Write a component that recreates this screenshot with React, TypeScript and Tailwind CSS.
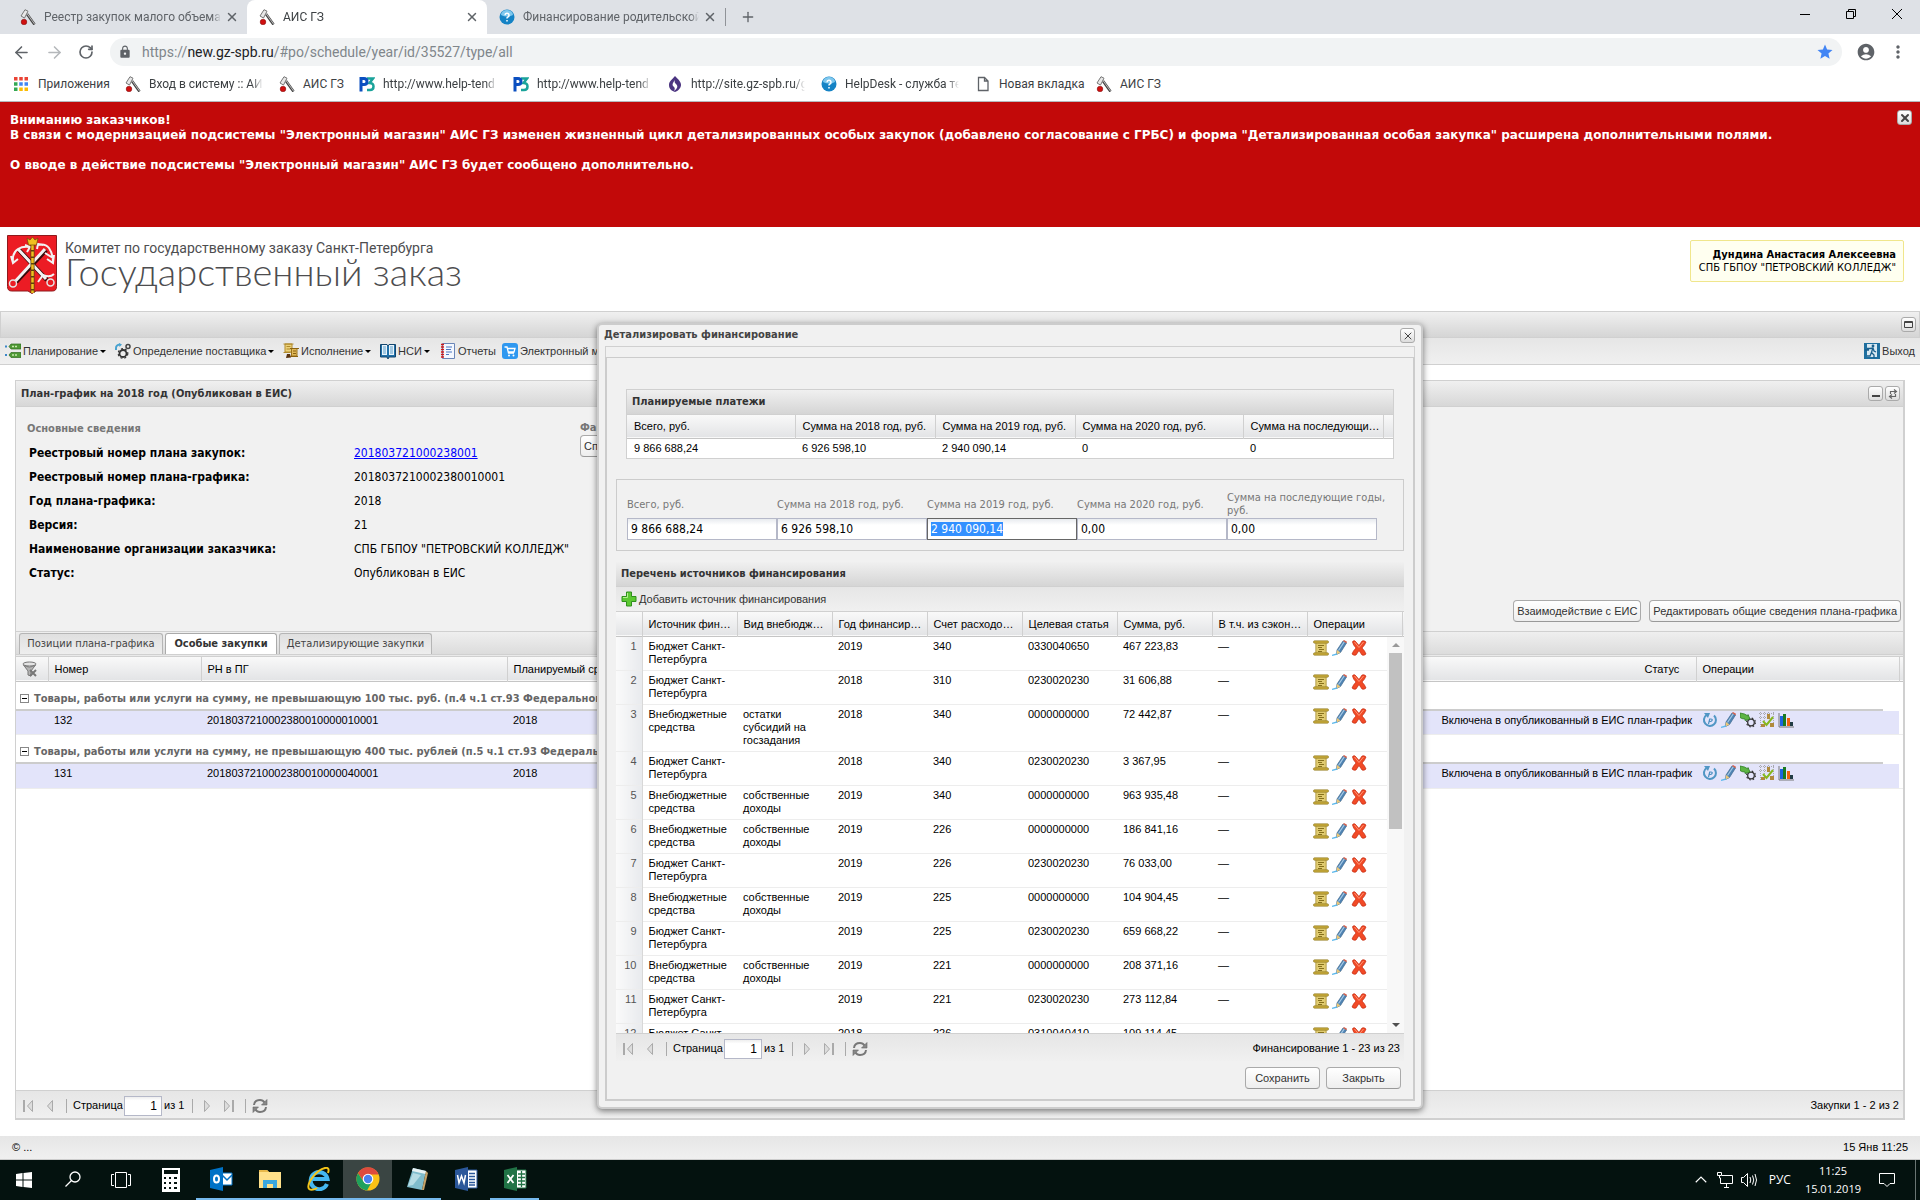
import { ReactNode, useEffect, useRef } from 'react'
import clsx from 'clsx'
import { ArrowLeft, ArrowRight, Plus, RotateCw, X } from 'lucide-react'
import { MdAccountCircle, MdLock, MdMoreVert, MdStar } from 'react-icons/md'

const tabs = [
  { title: 'Реестр закупок малого объема', icon: 'gavel', active: false, width: 'w-[247px] pl-5' },
  { title: 'АИС ГЗ', icon: 'gavel', active: true, width: 'w-60 pl-3' },
  { title: 'Финансирование родительской', icon: 'help', active: false, width: 'w-[238px] pl-3' },
]

const bookmarks = [
  { title: 'Вход в систему :: АИС', icon: 'gavel', width: 'w-[154px]', long: true },
  { title: 'АИС ГЗ', icon: 'gavel', width: 'w-20' },
  { title: 'http://www.help-tend', icon: 'p3', width: 'w-[154px]', long: true },
  { title: 'http://www.help-tend', icon: 'p3', width: 'w-[154px]', long: true },
  { title: 'http://site.gz-spb.ru/g', icon: 'drop', width: 'w-[154px]', long: true },
  { title: 'HelpDesk - служба те', icon: 'help', width: 'w-[154px]', long: true },
  { title: 'Новая вкладка', icon: 'page', width: 'w-[121px]' },
  { title: 'АИС ГЗ', icon: 'gavel', width: 'w-20' },
]

const menu = [
  { title: 'Планирование', icon: 'plan', arrow: true, width: 'w-[110px]' },
  { title: 'Определение поставщика', icon: 'gears', arrow: true, width: 'w-[168px]' },
  { title: 'Исполнение', icon: 'scrolls', arrow: true, width: 'w-[97px]' },
  { title: 'НСИ', icon: 'book', arrow: true, width: 'w-[60px]' },
  { title: 'Отчеты', icon: 'report', arrow: false, width: 'w-[62px]' },
  { title: 'Электронный магазин', icon: 'cart', arrow: false, width: 'w-40' },
]

const info = [
  { label: 'Реестровый номер плана закупок:', value: '201803721000238001', link: true },
  { label: 'Реестровый номер плана-графика:', value: '2018037210002380010001' },
  { label: 'Год плана-графика:', value: '2018' },
  { label: 'Версия:', value: '21' },
  { label: 'Наименование организации заказчика:', value: 'СПБ ГБПОУ "ПЕТРОВСКИЙ КОЛЛЕДЖ"' },
  { label: 'Статус:', value: 'Опубликован в ЕИС' },
]

const purchases = [
  {
    group: 'Товары, работы или услуги на сумму, не превышающую 100 тыс. руб. (п.4 ч.1 ст.93 Федерального закона № 44-ФЗ)',
    number: '132',
    rn: '2018037210002380010000010001',
  },
  {
    group: 'Товары, работы или услуги на сумму, не превышающую 400 тыс. рублей (п.5 ч.1 ст.93 Федерального закона № 44-ФЗ)',
    number: '131',
    rn: '2018037210002380010000040001',
  },
]

const plannedHead = ['Всего, руб.', 'Сумма на 2018 год, руб.', 'Сумма на 2019 год, руб.', 'Сумма на 2020 год, руб.', 'Сумма на последующие годы, руб.']
const planned = ['9 866 688,24', '6 926 598,10', '2 940 090,14', '0', '0']

const fields = [
  { id: 'total', label: 'Всего, руб.', value: '9 866 688,24' },
  { id: 'y2018', label: 'Сумма на 2018 год, руб.', value: '6 926 598,10' },
  { id: 'y2019', label: 'Сумма на 2019 год, руб.', value: '2 940 090,14' },
  { id: 'y2020', label: 'Сумма на 2020 год, руб.', value: '0,00' },
  { id: 'later', label: 'Сумма на последующие годы, руб.', value: '0,00' },
]

const sourceHead = [
  'Источник финансирования',
  'Вид внебюджетных средств',
  'Год финансирования',
  'Счет расходования',
  'Целевая статья',
  'Сумма, руб.',
  'В т.ч. из сэкономленных',
  'Операции',
]

const budget = 'Бюджет Санкт-Петербурга'
const extra = 'Внебюджетные средства'
const own = 'собственные доходы'

const sources = [
  [budget, '', '2019', '340', '0330040650', '467 223,83'],
  [budget, '', '2018', '310', '0230020230', '31 606,88'],
  [extra, 'остатки субсидий на госзадания', '2018', '340', '0000000000', '72 442,87'],
  [budget, '', '2018', '340', '0230020230', '3 367,95'],
  [extra, own, '2019', '340', '0000000000', '963 935,48'],
  [extra, own, '2019', '226', '0000000000', '186 841,16'],
  [budget, '', '2019', '226', '0230020230', '76 033,00'],
  [extra, own, '2019', '225', '0000000000', '104 904,45'],
  [budget, '', '2019', '225', '0230020230', '659 668,22'],
  [extra, own, '2019', '221', '0000000000', '208 371,16'],
  [budget, '', '2019', '221', '0230020230', '273 112,84'],
  [budget, '', '2018', '226', '0310040410', '109 114,45'],
]

const Svg = ({ children, className = 'size-4' }: { children: ReactNode; className?: string }) => (
  <svg viewBox="0 0 16 16" className={clsx('shrink-0', className)} fill="none" aria-hidden="true">
    {children}
  </svg>
)

const Icon = ({ name }: { name: string }) => {
  switch (name) {
    case 'gavel':
      return (
        <Svg>
          <path d="m7 5 7.500 10.500" stroke="#444" strokeWidth="2.600" />
          <path d="m7 4.500 7.500 10.500" stroke="#bbb" />
          <path d="M1 7 5 .7l3 1.500L4.500 9z" fill="#e8e8e8" stroke="#777" />
          <circle cx="4" cy="13" r="2.800" fill="#d01010" stroke="#700" strokeWidth=".5" />
        </Svg>
      )
    case 'help':
      return (
        <Svg>
          <circle cx="8" cy="8" r="7.500" fill="#1583c5" />
          <path d="M2 6a6 5 0 0 1 12 0q-6 3-12 0z" fill="#7fc8ee" />
          <path d="M6 6.200a2 2 0 1 1 2.500 2q-.5.3-.5 1.300M8 11v1.500" stroke="#fff" strokeWidth="1.500" />
        </Svg>
      )
    case 'p3':
      return (
        <Svg>
          <path d="M8 2.500h6L10.500 7q4 0 4 3.500t-3.500 3.500H8" stroke="#1aa39a" strokeWidth="2.500" />
          <path d="M2 15.500V2.500H5q3 0 3 3t-3 3H2" stroke="#0b4fc0" strokeWidth="3" />
        </Svg>
      )
    case 'drop':
      return (
        <Svg>
          <path d="M8 0c4 4 6 6 6 9s-3 6-6 7c-3-1-6-3-6-7s3-5 6-9z" fill="#4b3480" />
          <path d="M8 4c-3 4-3 5-1 7 1 1 1 2 0 4 4-3 4-5 2-7-1-1-2-2-1-4z" fill="#fff" />
        </Svg>
      )
    case 'page':
      return (
        <Svg>
          <path d="M3.500 1.500h6l3.500 3.500v9.500H3.500zM9.500 1.500V5H13" stroke="#5f6368" strokeWidth="1.300" />
        </Svg>
      )
    case 'plan':
      return (
        <Svg>
          <path d="M0 3.500h2M0 12h2" stroke="#3a86c8" strokeWidth="2" />
          <path d="M4 3.500 6 1h10v5H6zM4 12l2-2.500h10v5H6z" fill="#4f9a35" stroke="#2f6a1f" strokeWidth=".7" />
          <path d="M7 3.500h6M7 12h6" stroke="#c8e8b0" strokeWidth="1.500" strokeDasharray="2 1" />
        </Svg>
      )
    case 'gears':
      return (
        <Svg>
          <path d="M1 7V5q0-3 4-3.500" stroke="#4aa3d0" strokeWidth="2" />
          <path d="m4 0 3 1.500L4.500 4z" fill="#4aa3d0" />
          <circle cx="8" cy="10.500" r="3.500" stroke="#333" strokeWidth="1.800" />
          <circle cx="8" cy="10.500" r="4.800" stroke="#333" strokeWidth="1.200" strokeDasharray="2 2" />
          <circle cx="13" cy="3.500" r="2" stroke="#444" strokeWidth="1.500" />
        </Svg>
      )
    case 'scrolls':
      return (
        <Svg>
          <path d="M2 1h7v8H2z" fill="#ecd27a" stroke="#b08a2c" />
          <path d="M.5 1h10M.5 9.500h7M3.500 3.500h4M3.500 6h4" stroke="#b08a2c" strokeWidth="1.200" />
          <path d="M8.500 5.500H14V13H8.500z" fill="#e0b858" stroke="#9a721c" />
          <path d="M7 5.500h9M7.500 13.500H15M10 8h3M10 10.500h3" stroke="#8a6210" strokeWidth="1.200" />
          <path d="m3 15 1-4h3l1 3.500z" fill="#5a3410" />
        </Svg>
      )
    case 'book':
      return (
        <Svg>
          <path d="M.5 1.500H7L8 3l1-1.500h6.500V14H9l-1 2-1-2H.5z" fill="#1f6fa8" stroke="#14466e" />
          <path d="M2 2h5v10H2zM9 2h5v10H9z" fill="#eaf4fb" />
          <path d="M3 4h3M3 6h3M3 8h3M3 10h3M10 4h3M10 6h3M10 8h3M10 10h3" stroke="#5a9cc8" />
        </Svg>
      )
    case 'report':
      return (
        <Svg>
          <path d="M2.500.5h12v15h-12z" fill="#f4f8ff" stroke="#6a86b8" />
          <path d="M1 1.500h3M1 4h3M1 6.500h3M1 9h3M1 11.500h3M1 14h3" stroke="#d01818" strokeWidth="1.500" />
          <path d="M6 4h6M6 6.500h5M6 9h6M6 11.500h3" stroke="#4a76c0" />
        </Svg>
      )
    case 'cart':
      return (
        <Svg>
          <rect width="16" height="16" rx="3" fill="#2f98f0" />
          <path d="M2.500 4H5l1.500 6H12M5.500 5.500H13L12 9H6.500" stroke="#fff" strokeWidth="1.300" />
          <circle cx="7" cy="12.500" r="1" fill="#fff" />
          <circle cx="11.500" cy="12.500" r="1" fill="#fff" />
        </Svg>
      )
    case 'exit':
      return (
        <Svg>
          <path d="M0 0h16v16H0z" fill="#1f6f9f" />
          <path d="M3 1h10v13H3z" fill="#d9e9f2" />
          <circle cx="9" cy="3" r="1.400" fill="#1a5f8c" />
          <path d="M3 5.500h3L9 5l1 3 2 1M8.500 6 7.500 9.500 10 12v3M7.500 9.500 6 13H3M1 7h4" stroke="#1a5f8c" strokeWidth="1.300" />
        </Svg>
      )
    case 'scroll':
      return (
        <Svg>
          <path d="M3 2.500h10V13H3z" fill="#e0cb70" />
          <path d="M2.800 3v10M13.200 3v10" stroke="#a68c2c" strokeWidth=".8" />
          <rect x=".5" y=".8" width="15" height="2.400" rx="1" fill="#c8ab3a" stroke="#8a7420" strokeWidth=".6" />
          <rect x=".5" y="12.800" width="15" height="2.400" rx="1" fill="#c8ab3a" stroke="#8a7420" strokeWidth=".6" />
          <path d="M5 5.500h6M5 7.500h4M6 9.500h5M5 11.500h4" stroke="#7d6713" strokeWidth=".9" />
        </Svg>
      )
    case 'pencil':
      return (
        <Svg>
          <path d="m5 10 6-9 3.500 2-6 9.500-4 2z" fill="#4f84b4" stroke="#3d678c" strokeWidth=".7" />
          <path d="m6.500 10.500 6-9" stroke="#a8cbe6" strokeWidth="1.200" />
          <path d="m11 1 1-1 3 1.800-.5 1.400z" fill="#d4604c" />
          <path d="m5 10-.5 4.500 4-2z" fill="#ecc878" />
          <path d="M0 15.300 5 14" stroke="#5cb8ec" strokeWidth="1.300" />
        </Svg>
      )
    case 'delete':
      return (
        <Svg>
          <path d="M2 1q2-1 3 1l3 3.500L11 1q2-1 4 1-1 3-4 6 3 3 4 6-2 2-4 1l-3-4.500L5 15q-2 1-4-1 1-3 4-6Q2 5 1.500 2z" fill="#f24a26" stroke="#c32a10" strokeWidth=".7" />
          <path d="M3.500 2 8 7.500 12.500 2" stroke="#ff9475" strokeWidth="1" />
        </Svg>
      )
    case 'history':
      return (
        <Svg>
          <path d="M4.500 3A6 6 0 1 0 12 3.500" stroke="#5096c4" strokeWidth="2" />
          <path d="M2 1h6L6 6z" fill="#5096c4" />
          <path d="m6.500 12 1.200-5H9q1.500 0 1.200 1.200T8.500 9.500H7.300" stroke="#4a8fc0" strokeWidth="1.200" />
        </Svg>
      )
    case 'link':
      return (
        <Svg>
          <circle cx="11" cy="10.500" r="3.300" stroke="#333" strokeWidth="1.300" />
          <circle cx="11" cy="10.500" r="4.400" stroke="#333" strokeWidth="1.200" strokeDasharray="1.500 2" />
          <path d="M0 1q5 .5 8 3V2.500L10 7 5 8.500V7Q2 7 0 5.500z" fill="#5db544" stroke="#2f7d23" strokeWidth=".8" />
        </Svg>
      )
    case 'check':
      return (
        <Svg>
          <path d="M1.500 0v16M5.500 0v9M9.500 0v5M14.500 0v16M0 1.500h16M0 5.500h7" stroke="#999" strokeWidth=".8" strokeDasharray="1 1" />
          <path d="M2 12h4v3H2zM11 11h4v4h-4zM8 2h3v5H8z" fill="#b08a3c" />
          <path d="m4 9 3.500 4L14 5" stroke="#86b81e" strokeWidth="2" />
        </Svg>
      )
    case 'chart':
      return (
        <Svg>
          <path d="M1 1v14h15" stroke="#777" />
          <path d="M2 4h3v10H2z" fill="#1d64e0" />
          <path d="M5 2h3v12H5z" fill="#1a7a20" />
          <path d="M9 6h3v8H9z" fill="#f0620c" />
          <path d="M12 10h3v4h-3z" fill="#223c44" />
        </Svg>
      )
    case 'filter':
      return (
        <Svg>
          <path d="M1.500 4q6 4 12 0L9 10v5l-3-1v-4z" fill="#b4b4b4" stroke="#777" />
          <ellipse cx="7.500" cy="3" rx="6.500" ry="2" fill="#e4e4e4" stroke="#777" />
          <path d="m8 9 6 6M14 9l-6 6" stroke="#777" strokeWidth="2" />
        </Svg>
      )
    case 'add':
      return (
        <Svg>
          <path d="M5.500 1h5v4.500H15v5h-4.500V15h-5v-4.500H1v-5h4.500z" fill="#5cc832" stroke="#2f8f1c" />
          <path d="M6.500 2v4.500H2" stroke="#b4f090" />
        </Svg>
      )
    case 'refresh':
      return (
        <Svg>
          <path d="M2 7q.5-5 6-5 3 0 4.500 2.500" stroke="#777" strokeWidth="2" />
          <path d="M15 1.500V7H9.500z" fill="#888" stroke="#666" strokeWidth=".6" />
          <path d="M14 9q-.5 5-6 5-3 0-4.500-2.500" stroke="#777" strokeWidth="2" />
          <path d="M1 14.500V9h5.500z" fill="#888" stroke="#666" strokeWidth=".6" />
        </Svg>
      )
    case 'first':
      return (
        <Svg>
          <path d="M4 2v12" stroke="#aaa" strokeWidth="2" />
          <path d="M12.500 2.500 7.500 8l5 5.500z" fill="#ddd" stroke="#aaa" />
        </Svg>
      )
    case 'prev':
      return (
        <Svg>
          <path d="m10.500 2.500-5 5.500 5 5.500z" fill="#ddd" stroke="#aaa" />
        </Svg>
      )
    case 'next':
      return (
        <Svg>
          <path d="m5.500 2.500 5 5.500-5 5.500z" fill="#ddd" stroke="#aaa" />
        </Svg>
      )
    default:
      return (
        <Svg>
          <path d="M12 2v12" stroke="#aaa" strokeWidth="2" />
          <path d="m3.500 2.500 5 5.500-5 5.500z" fill="#ddd" stroke="#aaa" />
        </Svg>
      )
  }
}

const Emblem = () => (
  <svg viewBox="0 0 50 59" className="h-[59px] w-[50px] shrink-0" fill="none" aria-hidden="true">
    <path d="M.5.500h49v51q0 4.500-4 4.500H29l-4 2.500-4-2.500H4.500q-4 0-4-4.500z" fill="#ec1c24" stroke="#8e1a1c" />
    <path d="M9 47 39 15M12 15l28 30" stroke="#3a0a0a" strokeWidth="4.500" />
    <path d="M8.500 46 38 14M11 14l28 30" stroke="#f2f2f2" strokeWidth="3" />
    <circle cx="6" cy="48.500" r="3.500" stroke="#e4e4e4" strokeWidth="1.500" />
    <circle cx="43.500" cy="47.500" r="3.500" stroke="#e4e4e4" strokeWidth="1.500" />
    <path d="M6 27q-1-9 5-13 5-3 11-2M4 21l2 7 5-4M18 10l5 2-3 5" stroke="#f2f2f2" strokeWidth="2" />
    <path d="M31 10q7-2 11 3 4 6 4 14M30 14l1-5 5 1M47 20l-1 8-6-4M38 18l8 5" stroke="#f2f2f2" strokeWidth="2" />
    <path d="m31 47 5-7q7 3 11-1" stroke="#f2f2f2" strokeWidth="2" />
    <path d="M25.500 10v48" stroke="#5c420a" strokeWidth="4" />
    <path d="M25.500 10v48" stroke="#f0c020" strokeWidth="2.500" strokeDasharray="5 1.500" />
    <path d="m20 3 3 2 2.500-3L28 5l3-2-1.500 7h-8z" fill="#f0c020" stroke="#6a4a08" strokeWidth=".7" />
  </svg>
)

const Tool = ({ label, children }: { label: string; children: ReactNode }) => (
  <button aria-label={label} className="flex size-[15px] items-center justify-center rounded-[3px] border border-[#aaa] bg-gradient-to-b from-white to-[#ddd] text-[#444]">
    {children}
  </button>
)

const Button = ({ children, className }: { children: ReactNode; className?: string }) => (
  <button className={clsx('h-[22px] rounded-[4px] border border-[#aaa] border-b-[#999] bg-gradient-to-b from-white to-[#eee] px-[3px] whitespace-nowrap text-[#333]', className)}>
    {children}
  </button>
)

const Separator = () => <span className="h-3.5 w-px bg-[#aaa]" />

const Paging = ({ summary, id }: { summary: string; id: string }) => (
  <div className="flex h-7 items-center border-t border-[#d0d0d0] bg-gradient-to-b from-[#e6e6e6] to-[#f0f0f0] px-1 pt-0.5 text-[11px] text-black">
    <button aria-label="Первая" className="mr-1.5"><Icon name="first" /></button>
    <button aria-label="Предыдущая" className="mr-2"><Icon name="prev" /></button>
    <Separator />
    <label htmlFor={id} className="ml-1.5 w-[51px]">Страница</label>
    <input id={id} defaultValue="1" className="h-5 w-[38px] border border-[#b5b8c8] bg-white bg-gradient-to-b from-[#eee] to-white to-20% pr-1 text-right text-xs outline-none" />
    <span className="ml-0.5 w-7">из 1</span>
    <Separator />
    <button aria-label="Следующая" className="mr-1.5 ml-1.5"><Icon name="next" /></button>
    <button aria-label="Последняя" className="mr-2"><Icon name="last" /></button>
    <Separator />
    <button aria-label="Обновить" className="ml-1.5"><Icon name="refresh" /></button>
    <span className="ml-auto">{summary}</span>
  </div>
)

const Browser = () => (
  <header className="font-[Roboto,sans-serif] text-xs">
    <div className="flex h-[34px] items-stretch bg-[#dee1e6]">
      {tabs.map((tab, i) => (
        <div key={i} className={clsx('flex items-center pr-2', tab.width, tab.active ? 'rounded-t-lg bg-white text-[#3c4043]' : 'text-[#5f6368]')}>
          <Icon name={tab.icon} />
          <span className="mr-1 ml-2 min-w-0 flex-1 overflow-hidden mask-r-from-95% whitespace-nowrap">{tab.title}</span>
          <button aria-label="Закрыть вкладку"><X className="size-3.5 text-[#5f6368]" strokeWidth={2.5} /></button>
        </div>
      ))}
      <div className="my-2 w-px bg-[#909398]" />
      <button aria-label="Новая вкладка" className="px-3.5"><Plus className="size-4 text-[#5f6368]" /></button>
      <div className="ml-auto flex items-center gap-9 pr-[18px]">
        <button aria-label="Свернуть" className="pb-1.5"><svg viewBox="0 0 10 10" className="size-2.5"><path d="M0 5.500h10" stroke="#000" /></svg></button>
        <button aria-label="Развернуть" className="pb-1.5"><svg viewBox="0 0 10 10" className="size-2.5" fill="none"><path d="M.5 2.500h7v7h-7zM2.500 2V.500h7v7H8" stroke="#000" /></svg></button>
        <button aria-label="Закрыть" className="pb-1.5"><svg viewBox="0 0 10 10" className="size-2.5"><path d="m0 0 10 10M10 0 0 10" stroke="#000" /></svg></button>
      </div>
    </div>
    <div className="flex h-9 items-center bg-white pr-3 pl-3">
      <button aria-label="Назад"><ArrowLeft className="size-[19px] text-[#5f6368]" /></button>
      <button aria-label="Вперед" className="ml-3.5"><ArrowRight className="size-[19px] text-[#b5b8bb]" /></button>
      <button aria-label="Обновить" className="ml-3.5"><RotateCw className="size-4 text-[#5f6368]" strokeWidth={2.5} /></button>
      <div className="ml-4 flex h-7 flex-1 items-center rounded-full bg-[#f1f3f4] px-2">
        <MdLock className="size-3.5 text-[#5f6368]" />
        <a href="#" className="ml-2.5 flex-1 text-sm text-[#80868b]">https://<span className="text-[#202124]">new.gz-spb.ru</span>/#po/schedule/year/id/35527/type/all</a>
        <MdStar className="size-[18px] text-[#4285f4]" />
      </div>
      <MdAccountCircle className="ml-3.5 size-5 text-[#5f6368]" />
      <MdMoreVert className="ml-3 size-5 text-[#5f6368]" />
    </div>
    <nav className="flex h-8 items-center border-b border-[#b6b9bc] bg-white pb-[3px] pl-3.5 text-[#3c4043]">
      <a href="#" className="flex w-[111px] items-center gap-2.5">
        <Svg className="size-3.5">
          <path d="M0 2h4M6 2h4M12 2h4" stroke="#ea4335" strokeWidth="4" />
          <path d="M0 8h4" stroke="#34a853" strokeWidth="4" />
          <path d="M6 8h4M12 8h4" stroke="#4285f4" strokeWidth="4" />
          <path d="M0 14h4" stroke="#34a853" strokeWidth="4" />
          <path d="M6 14h4M12 14h4" stroke="#fbbc04" strokeWidth="4" />
        </Svg>
        Приложения
      </a>
      {bookmarks.map((mark, i) => (
        <a key={i} href="#" className={clsx('flex items-center', mark.width)}>
          <Icon name={mark.icon} />
          <span className={clsx('ml-2 whitespace-nowrap', mark.long && 'mr-4 flex-1 overflow-hidden mask-r-from-90%')}>{mark.title}</span>
        </a>
      ))}
    </nav>
  </header>
)

const PlanPanel = () => (
  <section className="mx-[15px] mt-[15px] mb-4 flex flex-1 flex-col border border-r-2 border-b-2 border-[#d0d0d0] bg-[#f1f1f1]">
    <div className="flex h-[26px] items-center gap-0.5 border-b border-[#d0d0d0] bg-gradient-to-b from-[#f0f0f0] to-[#d7d7d7] pr-[3px] pl-[5px]">
      <h2 className="flex-1 pt-0.5 font-['DejaVu_Sans_Condensed','DejaVu_Sans',sans-serif] text-[11px] font-bold text-[#333]">План-график на 2018 год (Опубликован в ЕИС)</h2>
      <Tool label="Свернуть панель"><svg viewBox="0 0 8 8" className="size-2"><path d="M0 6h8" stroke="#444" strokeWidth="2" /></svg></Tool>
      <Tool label="Обновить панель">
        <svg viewBox="0 0 10 10" className="size-2.5" fill="none"><path d="M2.500 5V2.500H8M7.500 5v2.500H2M6 .5l2.500 2-2.500 2M4 9.500l-2.500-2 2.500-2" stroke="#666" strokeWidth="1.200" /></svg>
      </Tool>
    </div>
    <div className="relative h-56 font-['DejaVu_Sans_Condensed','DejaVu_Sans',sans-serif] text-xs text-black">
      <h3 className="pt-3.5 pl-[11px] text-[11px] leading-4 font-bold text-[#777]">Основные сведения</h3>
      <dl className="grid grid-cols-[325px_1fr] pt-1 pl-[13px] leading-6">
        {info.map((item) => (
          <div key={item.label} className="contents">
            <dt className="font-bold">{item.label}</dt>
            <dd>{item.link ? <a href="#" className="text-[#00f] underline">{item.value}</a> : item.value}</dd>
          </div>
        ))}
      </dl>
      <div className="absolute top-3.5 left-[564px] font-['Liberation_Sans',Arial,sans-serif] text-[11px]">
        <div className="font-['DejaVu_Sans_Condensed','DejaVu_Sans',sans-serif] leading-[14px] font-bold text-[#777]">Файлы</div>
        <Button className="w-24 text-left">Список файлов</Button>
      </div>
      <div className="absolute right-0.5 bottom-[9px] flex gap-2 font-['Liberation_Sans',Arial,sans-serif] text-[11px]">
        <Button>Взаимодействие с ЕИС</Button>
        <Button>Редактировать общие сведения плана-графика</Button>
      </div>
    </div>
    <div className="flex h-6 items-end gap-0.5 border-y border-[#d0d0d0] bg-gradient-to-b from-[#efefef] to-[#dcdcdc] pl-[3px] font-['DejaVu_Sans_Condensed','DejaVu_Sans',sans-serif] text-[11px] text-[#444]">
      <button className="h-[21px] w-36 rounded-t-[3px] border border-b-0 border-[#b5b5b5] bg-gradient-to-b from-[#e0e0e0] to-[#eee]">Позиции плана-графика</button>
      <button className="h-[21px] w-[112px] rounded-t-[3px] border border-b-0 border-[#aaa] bg-white font-bold text-[#333]">Особые закупки</button>
      <button className="h-[21px] w-[153px] rounded-t-[3px] border border-b-0 border-[#b5b5b5] bg-gradient-to-b from-[#e0e0e0] to-[#eee]">Детализирующие закупки</button>
    </div>
    <div className="h-0.5 border-b border-[#d0d0d0] bg-[#eaeaea]" />
    <div className="flex-1 bg-white">
      <table className="w-full table-fixed text-[11px] text-black">
        <colgroup>
          <col className="w-8" />
          <col className="w-[153px]" />
          <col className="w-[306px]" />
          <col />
          <col className="w-[280px]" />
          <col className="w-[203px]" />
          <col className="w-1" />
        </colgroup>
        <thead>
          <tr className="h-6 border-b border-[#c5c5c5] bg-gradient-to-b from-[#f9f9f9] to-[#e3e4e6] text-left [&>th]:border-r [&>th]:border-[#d0d0d0] [&>th]:px-1.5 [&>th]:font-normal">
            <th><button aria-label="Фильтр" className="block"><Icon name="filter" /></button></th>
            <th>Номер</th>
            <th>РН в ПГ</th>
            <th>Планируемый срок</th>
            <th className="pl-57!">Статус</th>
            <th>Операции</th>
            <th className="border-r-0!" />
          </tr>
        </thead>
        {purchases.map((item) => (
          <tbody key={item.number}>
            <tr>
              <td colSpan={7} className="pr-5">
                <div className="flex h-[29px] items-end border-b-2 border-[#ccc] pb-0.5 pl-1 font-['DejaVu_Sans_Condensed','DejaVu_Sans',sans-serif] leading-4 font-bold text-[#666]">
                  <button aria-label="Свернуть группу" className="mr-[5px] mb-1 flex size-[9px] items-center justify-center border border-[#888] bg-white">
                    <span className="h-px w-[5px] bg-black" />
                  </button>
                  {item.group}
                </div>
              </td>
            </tr>
            <tr className="h-6 border-b border-[#ededed] bg-[#e3e4fa] align-top leading-4 [&>td]:px-1.5 [&>td]:pt-px">
              <td />
              <td>{item.number}</td>
              <td>{item.rn}</td>
              <td>2018</td>
              <td className="pr-1! text-right whitespace-nowrap">Включена в опубликованный в ЕИС план-график</td>
              <td>
                <div className="flex gap-[3px]">
                  {['history', 'pencil', 'link', 'check', 'chart'].map((name) => (
                    <button key={name} aria-label={name}><Icon name={name} /></button>
                  ))}
                </div>
              </td>
              <td className="bg-white" />
            </tr>
          </tbody>
        ))}
      </table>
    </div>
    <Paging id="page-main" summary="Закупки 1 - 2 из 2" />
  </section>
)

const FinanceWindow = () => {
  const selected = useRef<HTMLInputElement>(null)

  useEffect(() => {
    selected.current?.focus()
    selected.current?.select()
  }, [])

  return (
    <div role="dialog" aria-label="Детализировать финансирование" className="absolute top-[323px] left-[597px] w-[826px] rounded-[5px] border-2 border-[#ccc] bg-[#f1f1f1] px-1.5 pb-1.5 text-[11px] text-black shadow-[0_2px_6px_rgba(0,0,0,0.5)]">
      <div className="flex h-[21px] items-center">
        <h2 className="-ml-px flex-1 font-['DejaVu_Sans_Condensed','DejaVu_Sans',sans-serif] font-bold text-[#444]">Детализировать финансирование</h2>
        <Tool label="Закрыть окно"><X className="size-3" /></Tool>
      </div>
      <div className="h-[11px] border border-b-0 border-[#d0d0d0]" />
      <div className="border-2 border-t border-[#ccc] px-[9px] pb-2.5">
        <section className="mx-2.5 mt-[31px] border border-[#d0d0d0] bg-white">
          <h3 className="flex h-[25px] items-center border-b border-[#d0d0d0] bg-gradient-to-b from-[#f0f0f0] to-[#d5d5d5] pl-[5px] font-['DejaVu_Sans_Condensed','DejaVu_Sans',sans-serif] font-bold text-[#333]">Планируемые платежи</h3>
          <table className="w-full table-fixed">
            <colgroup>
              <col className="w-[168px]" />
              <col className="w-[140px]" />
              <col className="w-[140px]" />
              <col className="w-[168px]" />
              <col className="w-[140px]" />
              <col />
            </colgroup>
            <thead>
              <tr className="h-[23px] border-b border-[#c5c5c5] bg-gradient-to-b from-[#f9f9f9] to-[#e3e4e6] text-left">
                {plannedHead.map((title) => (
                  <th key={title} className="truncate border-r border-[#d0d0d0] pr-0.5 pl-[7px] font-normal">{title}</th>
                ))}
                <th />
              </tr>
            </thead>
            <tbody>
              <tr className="h-5">
                {planned.map((value, i) => (
                  <td key={i} className="px-[7px]">{value}</td>
                ))}
                <td />
              </tr>
            </tbody>
          </table>
        </section>

        <form className="mt-5 flex items-end border border-[#ccc] px-2.5 pt-[11px] pb-2.5">
          {fields.map((field) => (
            <div key={field.id} className="w-[150px]">
              <label htmlFor={field.id} className={clsx("block w-40 font-['DejaVu_Sans_Condensed','DejaVu_Sans',sans-serif] text-[11px] leading-[13px] text-[#777]", field.id === 'later' ? 'pb-px' : 'pb-[7px]')}>{field.label}</label>
              <input
                id={field.id}
                ref={field.id === 'y2019' ? selected : undefined}
                defaultValue={field.value}
                className="h-[22px] w-full border border-[#b5b8c8] bg-white bg-gradient-to-b from-[#e8ebef] to-white to-30% px-[3px] font-['DejaVu_Sans_Condensed','DejaVu_Sans',sans-serif] text-xs outline-none selection:bg-[#3390ff] selection:text-white focus:border-[#666]"
              />
            </div>
          ))}
        </form>

        <section className="mt-[11px]">
          <h3 className="flex h-[25px] items-center border-b border-[#d0d0d0] bg-gradient-to-b from-[#f0f0f0] to-[#d5d5d5] pl-[5px] font-['DejaVu_Sans_Condensed','DejaVu_Sans',sans-serif] font-bold text-[#333]">Перечень источников финансирования</h3>
          <div className="flex h-[25px] items-center border-b border-[#d0d0d0] bg-gradient-to-b from-[#e6e6e6] to-[#f0f0f0] px-[5px]">
            <button className="flex items-center gap-0.5 text-[#333]"><Icon name="add" />Добавить источник финансирования</button>
          </div>
          <div className="relative h-[421px] overflow-hidden bg-white">
            <table className="w-full table-fixed">
              <colgroup>
                <col className="w-[26px]" />
                {sourceHead.map((title) => (
                  <col key={title} className="w-[95px]" />
                ))}
                <col />
              </colgroup>
              <thead>
                <tr className="h-6 border-b border-[#c5c5c5] bg-gradient-to-b from-[#f9f9f9] to-[#e3e4e6] text-left">
                  <th className="border-r border-[#d0d0d0]" />
                  {sourceHead.map((title) => (
                    <th key={title} className="truncate border-r border-[#d0d0d0] pr-1 pl-1.5 font-normal">{title}</th>
                  ))}
                  <th />
                </tr>
              </thead>
              <tbody>
                {sources.map((row, i) => (
                  <tr key={i} className="border-b border-[#ededed] align-top leading-[13px] [&>td]:pt-[3px] [&>td]:pb-1">
                    <td className="border-r border-[#d8d8d8] bg-gradient-to-r from-[#fafafa] to-[#e8eaed] pr-[5px] text-right text-[#555]">{i + 1}</td>
                    {row.map((value, j) => (
                      <td key={j} className="px-1.5">{value}</td>
                    ))}
                    <td className="px-1.5">—</td>
                    <td className="px-1.5">
                      <div className="flex gap-[3px]">
                        {['scroll', 'pencil', 'delete'].map((name) => (
                          <button key={name} aria-label={name}><Icon name={name} /></button>
                        ))}
                      </div>
                    </td>
                  </tr>
                ))}
              </tbody>
            </table>
            <div className="absolute top-[25px] right-0 bottom-0 flex w-[17px] flex-col items-center bg-[#f8f8f8]">
              <svg viewBox="0 0 8 4" className="mt-1.5 mb-1.5 h-1 w-2"><path d="M0 4h8L4 0z" fill="#999" /></svg>
              <span className="h-44 w-[13px] bg-[#c1c1c1]" />
              <svg viewBox="0 0 8 4" className="mt-auto mb-1.5 h-1 w-2"><path d="M0 0h8L4 4z" fill="#505050" /></svg>
            </div>
          </div>
          <Paging id="page-sources" summary="Финансирование 1 - 23 из 23" />
        </section>

        <div className="mt-1.5 flex justify-end gap-1.5 pr-[3px]">
          <Button className="w-[75px]">Сохранить</Button>
          <Button className="w-[75px]">Закрыть</Button>
        </div>
      </div>
    </div>
  )
}

const Taskbar = () => {
  const cell = 'flex h-10 w-[49px] items-center justify-center border-b-2'
  const open = 'border-[#76b9ed]'
  return (
    <footer className="flex h-10 items-center bg-[#04120f] font-['Open_Sans',sans-serif] text-xs text-white">
      <button aria-label="Пуск" className="flex h-10 w-12 items-center justify-center">
        <Svg><path d="m0 2 6.500-1v6.500H0zM7.500.900 16 0v7.500H7.500zM0 8.500h6.500V15L0 14zM7.500 8.500H16V16l-8.500-1z" fill="#fff" /></Svg>
      </button>
      <button aria-label="Поиск" className={clsx(cell, 'border-transparent')}>
        <Svg><circle cx="10" cy="6" r="5" stroke="#fff" strokeWidth="1.300" /><path d="m6.500 9.500-6 6" stroke="#fff" strokeWidth="1.300" /></Svg>
      </button>
      <button aria-label="Представление задач" className="flex h-10 w-12 items-center justify-center">
        <svg viewBox="0 0 20 16" className="h-4 w-5" fill="none"><path d="M4.500.500h11v15h-11zM3 2.500H.500v11H3M17 2.500h2.500v11H17" stroke="#fff" /></svg>
      </button>
      <button aria-label="Калькулятор" className="flex h-10 w-[51px] items-center justify-center">
        <svg viewBox="0 0 18 24" className="h-6 w-[18px]" fill="none"><path d="M0 0h18v24H0z" fill="#fff" /><path d="M2 2h14v4H2zM2 9h2v2H2zM7 9h2v2H7zM12 9h3v2h-3zM2 14h2v2H2zM7 14h2v2H7zM12 14h3v2h-3zM2 19h2v2H2zM7 19h2v2H7zM12 19h3v2h-3z" fill="#04120f" /></svg>
      </button>
      <button aria-label="Outlook" className={clsx(cell, open)}>
        <svg viewBox="0 0 24 24" className="size-6"><path d="M12 6h11v12H12z" fill="#fff" stroke="#0072c6" /><path d="m13 8 5 5 5-5" fill="none" stroke="#0072c6" strokeWidth="1.500" /><path d="m1 3 13-3v24L1 21z" fill="#0072c6" /><ellipse cx="7.500" cy="12" rx="2.500" ry="3.500" fill="none" stroke="#fff" strokeWidth="2" /></svg>
      </button>
      <button aria-label="Проводник" className={clsx(cell, open)}>
        <svg viewBox="0 0 24 24" className="size-6"><path d="M1 3h8l2 2h12v16H1z" fill="#ffe08a" /><path d="M1 3h8l2 2H1z" fill="#e8b84a" /><path d="M5 21v-8h14v8h-4v-4H9v4z" fill="#3ba7e0" /></svg>
      </button>
      <button aria-label="Internet Explorer" className={clsx(cell, open)}>
        <svg viewBox="0 0 24 24" className="size-6" fill="none"><path d="M20 17a8.500 8.500 0 1 1 .5-5H5" stroke="#45b8f0" strokeWidth="4" /><path d="M2 22C-1 17 9 3 18 1q5-1 3 5M2 22q3 2 8-1" stroke="#f5c518" strokeWidth="2" /></svg>
      </button>
      <button aria-label="Chrome" className={clsx(cell, open, 'bg-[#3a4543]')}>
        <svg viewBox="0 0 24 24" className="size-6"><circle cx="12" cy="12" r="11.500" fill="#fbc116" /><path d="M2 6a11.500 11.500 0 0 1 20 0v1.500H12L7.500 14.500z" fill="#dd4b3e" /><path d="M2 6.200A11.500 11.500 0 0 0 11 23.500l5-9-8.500 0z" fill="#1fa15d" /><circle cx="12" cy="12" r="5.300" fill="#fff" /><circle cx="12" cy="12" r="4.200" fill="#4a80ee" /></svg>
      </button>
      <button aria-label="Блокнот" className={clsx(cell, open)}>
        <svg viewBox="0 0 24 24" className="size-6"><path d="m8 1 13 3-4 19-15-3z" fill="#7fbccc" /><path d="m8 1 13 3-.5 3L7 4z" fill="#e8f2f4" /><path d="m21 4 2 2-4 17h-2z" fill="#c6a268" /><path d="m8 6 8 2-8 10-5 1z" fill="#b6dce4" /></svg>
      </button>
      <button aria-label="Word" className={clsx(cell, 'border-transparent')}>
        <svg viewBox="0 0 24 24" className="size-6"><path d="M12 3h11v18H12z" fill="#fff" stroke="#2b579a" /><path d="M15 6.500h6M15 9.500h6M15 12.500h6M15 15.500h6M15 18h6" stroke="#2b579a" strokeWidth="1.300" /><path d="m1 3 13-3v24L1 21z" fill="#2b579a" /><path d="m3.500 8 1.500 8 2.500-7L10 16l1.500-8" fill="none" stroke="#fff" strokeWidth="1.500" /></svg>
      </button>
      <button aria-label="Excel" className={clsx(cell, open)}>
        <svg viewBox="0 0 24 24" className="size-6"><path d="M12 3h11v18H12z" fill="#fff" stroke="#217346" /><path d="M15 7h7M15 10.500h7M15 14h7M15 17.500h7M18.500 4v16" stroke="#217346" strokeWidth="1.300" /><path d="m1 3 13-3v24L1 21z" fill="#217346" /><path d="m4.500 8 6 8M10.500 8l-6 8" fill="none" stroke="#fff" strokeWidth="1.800" /></svg>
      </button>
      <div className="ml-auto flex h-full items-center">
        <Svg className="size-3"><path d="m1 11 7-7 7 7" stroke="#fff" strokeWidth="1.500" /></Svg>
        <Svg className="ml-2.5 size-4"><path d="M5 3.500h10.500v8H3.500V6M7 15.500h5M9.500 12v3M.5.500h4v3h-4zM2.500 4v2h1" stroke="#fff" /></Svg>
        <Svg className="ml-2 size-4"><path d="M.5 5.500h2l4-4v13l-4-4h-2zM9 5q1.500 3 0 6M11.500 3.500q2.500 4.500 0 9M14 2q3 6 0 12" stroke="#fff" /></Svg>
        <span className="ml-3 text-xs">РУС</span>
        <div className="ml-3.5 text-center text-[11px] leading-[18px]">
          <div>11:25</div>
          <div>15.01.2019</div>
        </div>
        <Svg className="ml-[18px] size-4"><path d="M.5 1.500h15v10H11L8 14.500l-3-3H.5z" stroke="#fff" /></Svg>
        <span className="mr-1 ml-5 h-full w-px bg-[#6a7573]" />
      </div>
    </footer>
  )
}

const App = () => {
  return (
    <div className="relative flex min-h-screen flex-col bg-white font-['Liberation_Sans',Arial,sans-serif]">
      <Browser />
      <div className="flex h-[125px] items-start justify-between bg-[#c20909] pt-2 pr-2 pl-2.5 text-white">
        <p className="pt-[3px] font-['DejaVu_Sans',sans-serif] text-xs leading-[15px] font-bold">
          Вниманию заказчиков!<br />
          В связи с модернизацией подсистемы "Электронный магазин" АИС ГЗ изменен жизненный цикл детализированных особых закупок (добавлено согласование с ГРБС) и форма "Детализированная особая закупка" расширена дополнительными полями.<br />
          <br />
          О вводе в действие подсистемы "Электронный магазин" АИС ГЗ будет сообщено дополнительно.
        </p>
        <Tool label="Закрыть уведомление"><X className="size-3" strokeWidth={4} /></Tool>
      </div>
      <div className="flex h-[84px] items-start justify-between pt-2 pr-4 pl-[7px]">
        <div className="flex gap-2">
          <Emblem />
          <div className="text-[#4d4d4f]">
            <div className="pt-1 font-[Roboto,sans-serif] text-sm leading-[18px]">Комитет по государственному заказу Санкт-Петербурга</div>
            <h1 className="font-[Lato,sans-serif] text-[38px] leading-7 font-light">Государственный заказ</h1>
          </div>
        </div>
        <div className="mt-[5px] rounded-xs border border-[#f0e68c] bg-[#fffff0] py-[7px] pr-[7px] pl-2 text-right font-['DejaVu_Sans_Condensed','DejaVu_Sans',sans-serif] text-[11px] leading-[13px] text-black">
          <div className="font-bold">Дундина Анастасия Алексеевна</div>
          <div>СПБ ГБПОУ "ПЕТРОВСКИЙ КОЛЛЕДЖ"</div>
        </div>
      </div>
      <div className="flex h-[27px] items-center justify-end border border-[#d0d0d0] bg-gradient-to-b from-[#f0f0f0] to-[#d5d5d5] pr-[3px]">
        <Tool label="Развернуть панель"><svg viewBox="0 0 9 7" className="h-[7px] w-[9px]" fill="none"><path d="M.5.500h8v6h-8zM0 1.500h9" stroke="#444" /></svg></Tool>
      </div>
      <nav className="flex h-[27px] items-center border-b border-[#d0d0d0] bg-gradient-to-b from-[#e6e6e6] to-[#f0f0f0] pr-[5px] pl-[5px] text-[11px] text-[#333]">
        {menu.map((item) => (
          <button key={item.title} className={clsx('flex items-center gap-0.5 whitespace-nowrap', item.width)}>
            <Icon name={item.icon} />
            {item.title}
            {item.arrow && <svg viewBox="0 0 6 3" className="h-[3px] w-1.5"><path d="M0 0h6L3 3z" fill="#000" /></svg>}
          </button>
        ))}
        <button className="ml-auto flex items-center gap-0.5"><Icon name="exit" />Выход</button>
      </nav>
      <PlanPanel />
      <div className="flex h-6 items-center justify-between border-b border-[#ccc] bg-gradient-to-b from-[#e6e6e6] to-[#f0f0f0] px-3 text-[11px] text-black">
        <span>© ...</span>
        <span>15 Янв 11:25</span>
      </div>
      <Taskbar />
      <FinanceWindow />
    </div>
  )
}

export default App
